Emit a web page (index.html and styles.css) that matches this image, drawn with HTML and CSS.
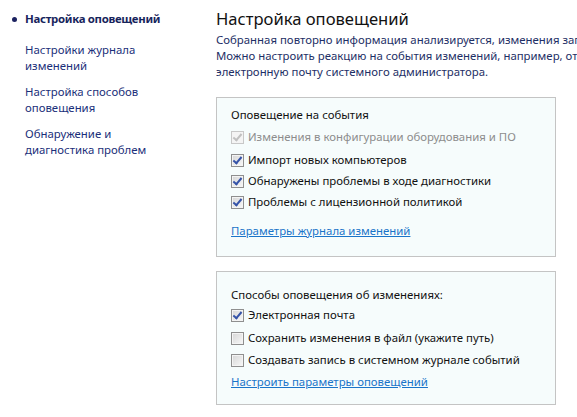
FILE: index.html
```html
<!DOCTYPE html>
<html lang="ru">
<head>
<meta charset="utf-8">
<link rel="stylesheet" href="styles.css">
</head>
<body>
<div class="page">
  <nav class="side">
    <ul class="nav">
      <li class="nav-item active">Настройка оповещений</li>
      <li class="nav-item">Настройки журнала изменений</li>
      <li class="nav-item">Настройка способов оповещения</li>
      <li class="nav-item">Обнаружение и диагностика проблем</li>
    </ul>
  </nav>
  <main class="main">
    <h1 class="title">Настройка оповещений</h1>
    <p class="desc">Собранная повторно информация анализируется, изменения записываются в журнал.<br>Можно настроить реакцию на события изменений, например, отправить сообщение на<br>электронную почту системного администратора.</p>
    <section class="box box1">
      <div class="box-title">Оповещение на события</div>
      <label class="row disabled"><span class="cb checked"></span>Изменения в конфигурации оборудования и ПО</label>
      <label class="row"><span class="cb checked"></span>Импорт новых компьютеров</label>
      <label class="row"><span class="cb checked"></span>Обнаружены проблемы в ходе диагностики</label>
      <label class="row"><span class="cb checked"></span>Проблемы с лицензионной политикой</label>
      <a class="link" href="#">Параметры журнала изменений</a>
    </section>
    <section class="box box2">
      <div class="box-title">Способы оповещения об изменениях:</div>
      <label class="row"><span class="cb checked"></span>Электронная почта</label>
      <label class="row"><span class="cb"></span>Сохранить изменения в файл (укажите путь)</label>
      <label class="row"><span class="cb"></span>Создавать запись в системном журнале событий</label>
      <a class="link" href="#">Настроить параметры оповещений</a>
    </section>
  </main>
</div>
</body>
</html>
```
FILE: styles.css
```css
html, body { margin: 0; padding: 0; background: #fff; }
body {
  font-family: "Noto Sans", "Open Sans", sans-serif;
  font-size: 11.4px;
  width: 577px;
  height: 417px;
  overflow: hidden;
}
.page { display: flex; width: 577px; overflow: hidden; }
.side { width: 216px; flex: none; }
.nav { list-style: none; margin: 0; padding: 11px 0 0 25px; width: 150px; }
.nav-item {
  color: #1b2f7a;
  line-height: 16px;
  margin-bottom: 10px;
  position: relative;
}
.nav-item.active {
  font-weight: bold;
  color: #17245c;
  margin-bottom: 15px;
  letter-spacing: -0.3px;
}
.nav-item.active::before {
  content: "";
  position: absolute;
  left: -13px; top: 6px;
  width: 5px; height: 5px;
  border-radius: 50%;
  background: #1c2260;
}
.main { flex: none; width: 361px; padding-top: 7px; overflow: hidden; }
.title {
  margin: 0;
  font-size: 16.6px;
  font-weight: normal;
  color: #111;
  line-height: 24px;
}
.desc {
  margin: 1px 0 0;
  line-height: 16px;
  color: #1e2f66;
  white-space: nowrap;
}
.box {
  box-sizing: border-box;
  width: 340px;
  border: 1px solid #c4c4c4;
  background: #f6fcfc;
  padding-left: 14px;
  display: flex;
  flex-direction: column;
  align-items: flex-start;
}
.box1 { margin-top: 17px; height: 160px; padding-top: 9px; }
.box2 { margin-top: 14px; height: 134px; padding-top: 15px; }
.box-title { line-height: 16px; color: #111; }
.row {
  display: flex;
  align-items: center;
  line-height: 16px;
  color: #111;
  margin-top: 5px;
}
.box1 .row:first-of-type { margin-top: 6px; }
.box1 .row:nth-of-type(2) { margin-top: 7px; }
.box2 .row { margin-top: 6px; }
.box2 .row:first-of-type { margin-top: 4px; }
.box2 .row:nth-of-type(2) { margin-top: 7px; }
.row.disabled { color: #8d8d8d; }
.cb {
  width: 11px; height: 11px;
  border: 1px solid #8f8f8f;
  background: linear-gradient(135deg, #d6d6d6, #f8f8f8);
  box-shadow: inset 0 0 0 1px #f4f4f4;
  margin-right: 4px;
  position: relative;
  flex: none;
}
.cb.checked::after {
  content: "";
  position: absolute;
  left: 3px; top: 0px;
  width: 3px; height: 7px;
  border: solid #3553a8;
  border-width: 0 2px 2px 0;
  transform: rotate(40deg);
}
.disabled .cb { border-color: #c8c8c8; background: #f4f4f4; }
.disabled .cb.checked::after { border-color: #c0c0c0; }
.link {
  color: #1a74c9;
  text-decoration: underline;
  line-height: 16px;
}
.box1 .link { margin-top: 13px; }
.box2 .link { margin-top: 6px; }
```
